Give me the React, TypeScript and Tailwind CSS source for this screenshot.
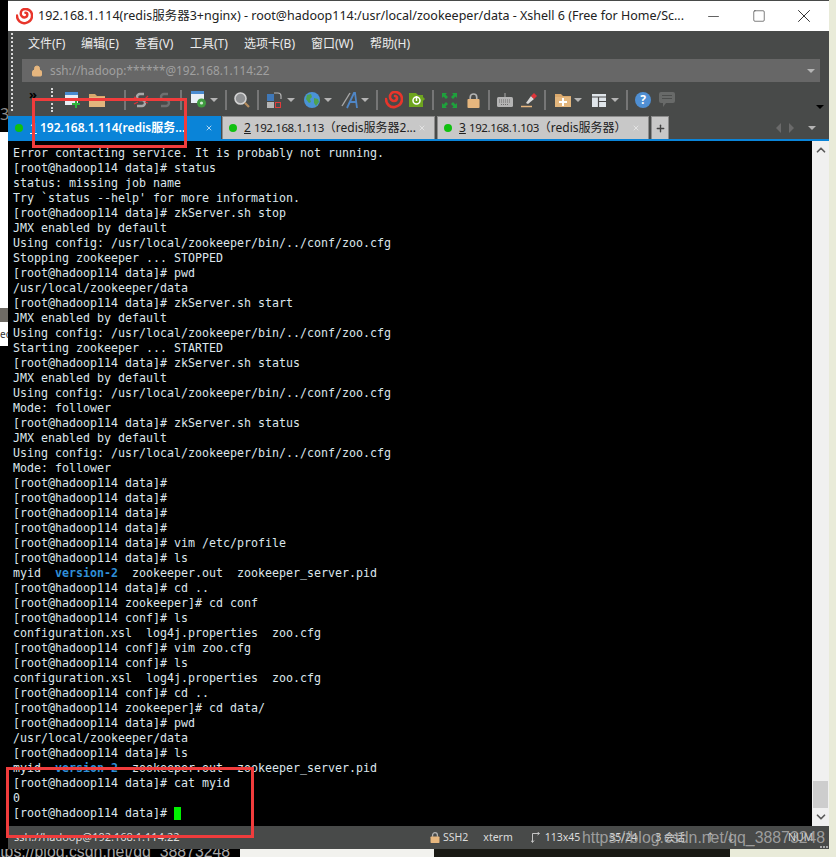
import { Minus, Square, X, Plus, ChevronUp, ChevronDown, Lock } from "lucide-react";

const UI = "font-['Noto_Sans','Noto_Sans_CJK_SC',sans-serif]";

const LINES = [
  "Error contacting service. It is probably not running.",
  "[root@hadoop114 data]# status",
  "status: missing job name",
  "Try `status --help' for more information.",
  "[root@hadoop114 data]# zkServer.sh stop",
  "JMX enabled by default",
  "Using config: /usr/local/zookeeper/bin/../conf/zoo.cfg",
  "Stopping zookeeper ... STOPPED",
  "[root@hadoop114 data]# pwd",
  "/usr/local/zookeeper/data",
  "[root@hadoop114 data]# zkServer.sh start",
  "JMX enabled by default",
  "Using config: /usr/local/zookeeper/bin/../conf/zoo.cfg",
  "Starting zookeeper ... STARTED",
  "[root@hadoop114 data]# zkServer.sh status",
  "JMX enabled by default",
  "Using config: /usr/local/zookeeper/bin/../conf/zoo.cfg",
  "Mode: follower",
  "[root@hadoop114 data]# zkServer.sh status",
  "JMX enabled by default",
  "Using config: /usr/local/zookeeper/bin/../conf/zoo.cfg",
  "Mode: follower",
  "[root@hadoop114 data]#",
  "[root@hadoop114 data]#",
  "[root@hadoop114 data]#",
  "[root@hadoop114 data]#",
  "[root@hadoop114 data]# vim /etc/profile",
  "[root@hadoop114 data]# ls",
  "LS",
  "[root@hadoop114 data]# cd ..",
  "[root@hadoop114 zookeeper]# cd conf",
  "[root@hadoop114 conf]# ls",
  "configuration.xsl  log4j.properties  zoo.cfg",
  "[root@hadoop114 conf]# vim zoo.cfg",
  "[root@hadoop114 conf]# ls",
  "configuration.xsl  log4j.properties  zoo.cfg",
  "[root@hadoop114 conf]# cd ..",
  "[root@hadoop114 zookeeper]# cd data/",
  "[root@hadoop114 data]# pwd",
  "/usr/local/zookeeper/data",
  "[root@hadoop114 data]# ls",
  "LS",
  "[root@hadoop114 data]# cat myid",
  "0",
];

const MENUS = [
  { label: "文件(F)", w: "w-[53px]" },
  { label: "编辑(E)", w: "w-[54px]" },
  { label: "查看(V)", w: "w-[55px]" },
  { label: "工具(T)", w: "w-[54px]" },
  { label: "选项卡(B)", w: "w-[67px]" },
  { label: "窗口(W)", w: "w-[59px]" },
  { label: "帮助(H)", w: "w-[50px]" },
];

function Caret({ className = "" }: { className?: string }) {
  return <span className={`h-0 w-0 shrink-0 border-x-[4px] border-t-[4px] border-x-transparent border-t-[#b4b4b4] ${className}`} />;
}

function Sep({ className = "" }: { className?: string }) {
  return <span className={`h-[20px] w-[2px] shrink-0 bg-[#767676] ${className}`} />;
}

function Shell({ size = 18 }: { size?: number }) {
  return (
    <svg width={size} height={size} viewBox="0 0 18 18" fill="none">
      <path d="M1 8c0 5 4 9 9 8 4-1 7-4 7-8 0-4-3-7-7-7-3 0-5 2-5 5 0 2 2 4 4 4 2 0 3-1 3-3 0-1-1-2-2-2" stroke="#e8352b" strokeWidth="2.6" strokeLinecap="round" />
    </svg>
  );
}

function NewSession() {
  return (
    <svg width="16" height="18" viewBox="0 0 16 18">
      <rect x="0" y="1" width="13" height="13" fill="#e8eef5" />
      <rect x="0" y="1" width="13" height="3" fill="#4a8bd0" />
      <path d="M10 9h2v3h3v2h-3v3h-2v-3H7v-2h3z" fill="#2fb53c" />
    </svg>
  );
}

function Folder({ plus = false }: { plus?: boolean }) {
  return (
    <svg width="16" height="14" viewBox="0 0 16 14">
      <path d="M0 1h6l2 2h8v11H0z" fill="#d9a86c" />
      <path d="M0 4h16v10H0z" fill="#e3b67d" />
      {plus && <path d="M7 5h2v3h3v2H9v3H7v-3H4V8h3z" fill="#fff" />}
    </svg>
  );
}

function Chain({ color, cut = false }: { color: string; cut?: boolean }) {
  return (
    <svg width="16" height="18" viewBox="0 0 16 18" fill="none">
      <path d="M11 3H7a3 3 0 0 0 0 6h2a3 3 0 0 1 0 6H4" stroke={color} strokeWidth="2.4" />
      {cut && <path d="M1 6l4 2M1 13l4-2M15 5l-3 3M15 12l-3-1" stroke="#d8343a" strokeWidth="1.3" />}
    </svg>
  );
}

function Props() {
  return (
    <svg width="16" height="18" viewBox="0 0 16 18">
      <rect x="0" y="0" width="13" height="12" fill="#e8eef5" />
      <rect x="0" y="0" width="13" height="3" fill="#4a8bd0" />
      <circle cx="10.5" cy="12" r="4.5" fill="#3f9b3f" />
      <circle cx="10.5" cy="12" r="1.6" fill="#cfe9cf" />
    </svg>
  );
}

function Magnifier() {
  return (
    <svg width="16" height="16" viewBox="0 0 16 16" fill="none">
      <circle cx="6.5" cy="6.5" r="5.5" fill="#8f9193" stroke="#d2d2d2" strokeWidth="1.6" />
      <path d="M10.800 10.800L15 15" stroke="#b58d5f" strokeWidth="2.200" />
    </svg>
  );
}

function Layout() {
  return (
    <svg width="17" height="18" viewBox="0 0 17 18" fill="none">
      <rect x="0" y="3" width="7" height="7" fill="#3f78b8" />
      <rect x="0" y="11" width="7" height="6" fill="#b5b5b5" />
      <rect x="8.5" y="11.5" width="5" height="5" stroke="#e03c3c" />
      <path d="M7 2h4a3 3 0 0 1 3 3v3" stroke="#b5b5b5" strokeWidth="1.2" />
    </svg>
  );
}

function Globe() {
  return (
    <svg width="16" height="16" viewBox="0 0 16 16">
      <circle cx="8" cy="8" r="8" fill="#4a93d6" />
      <path d="M3 3l4-1 1 3-2 2 1 3-2 1-3-4zM10 6l4 1 1 3-3 4-2-3z" fill="#4fa24f" />
    </svg>
  );
}

function FontA() {
  return (
    <svg width="20" height="18" viewBox="0 0 20 18" fill="none">
      <path d="M1 15L9 2" stroke="#a8a8a8" strokeWidth="1.4" />
      <path d="M6 17L13 2h1l2 15M9 11h7" stroke="#4f86c6" strokeWidth="1.8" />
    </svg>
  );
}

function Xftp() {
  return (
    <svg width="16" height="16" viewBox="0 0 16 16">
      <path d="M0 1h7l2 2h5v2l2 2-2 2v6H0z" fill="#6ea51f" />
      <circle cx="7.5" cy="8.5" r="3.5" fill="none" stroke="#fff" strokeWidth="1.5" />
      <path d="M7.5 4v5" stroke="#fff" strokeWidth="1.5" />
    </svg>
  );
}

function FullScreen() {
  return (
    <svg width="15" height="15" viewBox="0 0 15 15" fill="#1fa03c">
      <path d="M0 0h5L3.500 1.500 6 4 4 6 1.500 3.500 0 5zM15 0v5l-1.500-1.500L11 6 9 4l2.500-2.500L10 0zM0 15v-5l1.500 1.500L4 9l2 2-2.500 2.500L5 15zM15 15h-5l1.500-1.500L9 11l2-2 2.500 2.500L15 10z" />
    </svg>
  );
}

function Padlock({ w, h }: { w: number; h: number }) {
  return (
    <svg width={w} height={h} viewBox="0 0 14 16" fill="none">
      <path d="M3.500 7V4.500a3.500 3.500 0 0 1 7 0V7" stroke="#b3b3b3" strokeWidth="1.800" />
      <rect x="0.500" y="6.500" width="13" height="9.500" rx="1" fill="#e6b67e" />
    </svg>
  );
}

function Keyboard() {
  return (
    <svg width="16" height="14" viewBox="0 0 16 14">
      <path d="M8 0v4" stroke="#a8a8a8" />
      <rect x="0" y="4" width="16" height="10" rx="1.500" fill="#b4b4b4" />
      <path d="M2 7h12M2 9h12M4 11.500h8" stroke="#6d6d6d" strokeDasharray="1 1" />
    </svg>
  );
}

function Pen() {
  return (
    <svg width="16" height="15" viewBox="0 0 16 15">
      <path d="M5 10L10 3l3 3-6 5z" fill="#d9d9d9" />
      <path d="M10 3l3-3 3 3-3 3z" fill="#e0353b" />
      <path d="M0 13.500h11" stroke="#e6b67e" strokeWidth="1.500" />
    </svg>
  );
}

function Panes() {
  return (
    <svg width="14" height="13" viewBox="0 0 14 13">
      <rect width="14" height="13" fill="#dfe5ea" />
      <path d="M0 3h14M6.500 3v10M6.500 7.500H14" stroke="#4a4a4a" strokeWidth="1.200" />
    </svg>
  );
}

function Help() {
  return (
    <span className="flex h-4 w-4 shrink-0 items-center justify-center rounded-full bg-[#4f8fd3] text-[12px] font-bold leading-none text-white">?</span>
  );
}

function Chat() {
  return (
    <svg width="16" height="16" viewBox="0 0 16 16">
      <path d="M2 0h12a2 2 0 0 1 2 2v7a2 2 0 0 1-2 2H7l-3 4v-4H2a2 2 0 0 1-2-2V2a2 2 0 0 1 2-2z" fill="#686a69" />
      <path d="M3 3.500h10M3 6.500h10" stroke="#4c4e4d" />
    </svg>
  );
}

function Resize() {
  return (
    <svg width="9" height="11" viewBox="0 0 9 11" fill="none" stroke="#c4c4c4">
      <path d="M1.500 10V1.500H8" />
      <path d="M0 8.500l1.500 2 1.500-2M6.500 0L8.500 1.500 6.500 3" />
    </svg>
  );
}

function Toolbar() {
  return (
    <div className="relative flex h-[28px] items-center pb-[4px] pl-[21px]">
      <span className="w-[8px] shrink-0 pb-[12px] text-[13px] font-bold leading-none text-black">»</span>
      <span className="absolute left-[43px] top-0 h-[24px] border-l-2 border-dotted border-[#d8d8d8]" />
      <span className="ml-[28px] shrink-0"><NewSession /></span>
      <span className="ml-[8px] shrink-0"><Folder /></span>
      <Sep className="ml-[19px]" />
      <span className="ml-[7px] shrink-0"><Chain color="#a8a8a8" cut /></span>
      <span className="ml-[8px] shrink-0"><Chain color="#6f6f6f" /></span>
      <Sep className="ml-[7px]" />
      <span className="ml-[9px] shrink-0"><Props /></span>
      <Caret className="ml-[3px]" />
      <Sep className="ml-[7px]" />
      <span className="ml-[7px] shrink-0"><Magnifier /></span>
      <Sep className="ml-[7px]" />
      <span className="ml-[8px] shrink-0"><Layout /></span>
      <Caret className="ml-[3px]" />
      <span className="ml-[9px] shrink-0"><Globe /></span>
      <Caret className="ml-[4px]" />
      <span className="ml-[9px] shrink-0"><FontA /></span>
      <Caret />
      <Sep className="ml-[7px]" />
      <span className="ml-[7px] shrink-0"><Shell /></span>
      <span className="ml-[6px] shrink-0"><Xftp /></span>
      <Sep className="ml-[7px]" />
      <span className="ml-[8px] shrink-0"><FullScreen /></span>
      <span className="ml-[10px] shrink-0"><Padlock w={13} h={15} /></span>
      <Sep className="ml-[8px]" />
      <span className="ml-[7px] shrink-0"><Keyboard /></span>
      <span className="ml-[8px] shrink-0"><Pen /></span>
      <Sep className="ml-[7px]" />
      <span className="ml-[9px] shrink-0"><Folder plus /></span>
      <Caret className="ml-[3px]" />
      <span className="ml-[10px] shrink-0"><Panes /></span>
      <Caret className="ml-[5px]" />
      <Sep className="ml-[7px]" />
      <span className="ml-[7px] shrink-0"><Help /></span>
      <span className="ml-[8px] shrink-0"><Chat /></span>
      <span className="ml-[141px] mt-[14px] h-0 w-0 shrink-0 border-x-[4px] border-t-[4px] border-x-transparent border-t-black" />
    </div>
  );
}

function Tab({ n, ip, rest, active = false, className = "" }: { n: number; ip: string; rest: string; active?: boolean; className?: string }) {
  return (
    <div
      className={`flex h-[23px] items-center pr-[8px] text-[12px] ${
        active ? "bg-[#0a84d8] pl-[7px] font-semibold text-white" : "border-x border-t border-[#8c8c8c] bg-[#c8c8c8] pl-[6px] text-[#202020]"
      } ${className}`}
    >
      <span className="h-[8px] w-[8px] shrink-0 rounded-full bg-[#10c010]" />
      <span className="ml-[7px] min-w-0 flex-1 overflow-hidden whitespace-nowrap">
        <span className="underline">{n}</span> <span className={active ? "" : "text-[11.5px] tracking-[-0.4px]"}>{ip}</span>
        {rest}
      </span>
      <X className={`h-[8px] w-[8px] shrink-0 ${active ? "text-white" : "text-[#f0f0f0]"}`} strokeWidth={2} />
    </div>
  );
}

function TerminalLine({ text }: { text: string }) {
  if (text === "LS") {
    return (
      <div className="h-[15px] whitespace-pre">
        myid  <span className="font-bold text-[#2f8fd8]">version-2</span>  zookeeper.out  zookeeper_server.pid
      </div>
    );
  }
  return <div className="h-[15px] whitespace-pre">{text}</div>;
}

export default function App() {
  return (
    <div className={`relative flex h-[857px] w-[836px] overflow-hidden bg-black ${UI}`}>
      {/* what shows of the desktop on the left */}
      <div className="flex w-[8px] shrink-0 flex-col">
        <div className="flex h-[132px] items-end overflow-hidden bg-black pb-[10px] text-[16px] leading-none text-[#8a8a8a]">3</div>
        <div className="h-[176px] bg-white" />
        <div className="h-[14px] bg-[#6e6a64]" />
        <div className="flex h-[24px] items-center bg-white text-[10px] text-[#333]">ec</div>
        <div className="flex-1 bg-black" />
      </div>

      <div className="flex h-[849px] w-[821px] shrink-0 flex-col bg-[#484a49]">
        {/* title bar */}
        <div className="mt-px flex h-[30px] items-center bg-white pl-[8px] text-[#222]">
          <Shell size={17} />
          <span className="ml-[5px] w-[650px] whitespace-nowrap text-[12.5px]">
            192.168.1.114(redis服务器3+nginx) - root@hadoop114:/usr/local/zookeeper/data - Xshell 6 (Free for Home/Sc...
          </span>
          <Minus className="ml-[17px] h-[17px] w-[17px]" strokeWidth={1} absoluteStrokeWidth />
          <Square className="ml-[30px] h-[14px] w-[14px]" strokeWidth={1} absoluteStrokeWidth />
          <X className="ml-[27px] h-[22px] w-[22px]" strokeWidth={1} absoluteStrokeWidth />
        </div>

        <div className="relative">
          <div className="absolute left-[3px] top-[2px] h-[78px] border-l-2 border-dotted border-[#d8d8d8]" />
          {/* menu */}
          <div className="flex h-[28px] items-center pb-[3px] pl-[20px] text-[12px] text-[#ececec]">
            {MENUS.map((m) => (
              <span key={m.label} className={m.w}>
                {m.label}
              </span>
            ))}
          </div>
          {/* address bar */}
          <div className="ml-[14px] flex h-[23px] w-[798px] items-center bg-[#676767] pl-[9px] pr-[5px] text-[11.8px] text-[#a0a0a0]">
            <Lock className="h-[12px] w-[12px] text-[#e6b67e]" fill="#e6b67e" />
            <span className="ml-[7px] flex-1">ssh://hadoop:******@192.168.1.114:22</span>
            <Caret className="border-t-[#8a8a8a]" />
          </div>
          <div className="mt-[6px]">
            <Toolbar />
          </div>
        </div>

        {/* tabs */}
        <div className="flex items-center">
          <Tab n={1} ip="192.168.1.114" rest="(redis服务..." active className="w-[213px]" />
          <Tab n={2} ip="192.168.1.113" rest="（redis服务器2..." className="ml-px w-[213px]" />
          <Tab n={3} ip="192.168.1.103" rest="（redis服务器）" className="ml-[2px] w-[212px]" />
          <div className="ml-[2px] flex h-[23px] w-[18px] items-center justify-center border-x border-t border-[#8c8c8c] bg-[#c8c8c8]">
            <Plus className="h-[11px] w-[11px] text-[#444]" strokeWidth={3} />
          </div>
          <span className="ml-[107px] h-0 w-0 border-y-[5px] border-r-[5px] border-y-transparent border-r-[#6a6a6a]" />
          <span className="ml-[8px] h-0 w-0 border-y-[5px] border-l-[5px] border-y-transparent border-l-[#6a6a6a]" />
          <Caret className="ml-[14px] border-t-[#a8a8a8]" />
        </div>
        <div className="h-[2px] bg-[#0a84d8]" />

        {/* terminal */}
        <div className="flex h-[685px]">
          <div className="flex-1 overflow-hidden bg-black pl-[5px] pt-[5px] font-['DejaVu_Sans_Mono',monospace] text-[11.63px] leading-[15px] text-[#dce6ec]">
            {LINES.map((l, i) => (
              <TerminalLine key={i} text={l} />
            ))}
            <div className="flex h-[15px] items-center whitespace-pre">
              [root@hadoop114 data]# <span className="h-[13px] w-[7px] bg-[#00f000]" />
            </div>
          </div>
          <div className="flex w-[17px] flex-col items-center bg-[#f0f0f0] pb-[2px] pt-[2px]">
            <ChevronUp className="h-[14px] w-[14px] text-[#5a5a5a]" strokeWidth={3} />
            <div className="mt-auto h-[27px] w-[15px] bg-[#cdcdcd]" />
            <ChevronDown className="mt-[2px] h-[14px] w-[14px] text-[#5a5a5a]" strokeWidth={3} />
          </div>
        </div>

        {/* status bar */}
        <div className="relative flex h-[23px] items-center whitespace-nowrap pl-[6px] text-[10.5px] text-[#dcdcdc]">
          <span className="w-[416px] text-[11px]">ssh://hadoop@192.168.1.114:22</span>
          <Padlock w={10} h={11} />
          <span className="ml-[3px]">SSH2</span>
          <span className="ml-[15px]">xterm</span>
          <span className="ml-[18px]"><Resize /></span>
          <span className="ml-[5px]">113x45</span>
          <span className="ml-[29px]">35/24</span>
          <span className="ml-[18px]">3 会话</span>
          <span className="ml-[20px] text-[#c4c4c4]">↑</span>
          <span className="ml-[10px] text-[#c4c4c4]">↓</span>
          <span className="ml-[52px]">NUM</span>
          <span className="absolute bottom-[1px] right-[1px] h-[2px] w-[8px] border-t-2 border-dotted border-[#a8a8a8]" />
        </div>
      </div>

      {/* desktop on the right */}
      <div className="w-[7px] shrink-0 bg-[#e9ebd9]" />

      {/* desktop below the window */}
      <div className="absolute bottom-0 left-0 flex h-[8px] w-[836px] overflow-hidden">
        <div className="h-[8px] w-[240px] shrink-0 overflow-hidden bg-black pl-px font-['Liberation_Sans',sans-serif] text-[15.85px] leading-[5px] text-[#a8a8a8]">
          <span className="-ml-[14px] block whitespace-nowrap">https://blog.csdn.net/qq_38873248</span>
        </div>
        <div className="h-[8px] w-[194px] shrink-0 bg-[#f2f2ee]" />
        <div className="h-[8px] w-[296px] shrink-0 bg-[#1a1a14]" />
        <div className="h-[8px] flex-1 bg-[#e9ebd9]" />
      </div>

      {/* annotations on the screenshot */}
      <div className="absolute left-[32px] top-[98px] h-[50px] w-[155px] border-[3px] border-[#f03c3c]" />
      <div className="absolute left-[6px] top-[767px] h-[71px] w-[248px] border-[3px] border-[#f03c3c]" />
      <div className="absolute left-[582px] top-[826px] whitespace-nowrap font-['Liberation_Sans',sans-serif] text-[15.85px] text-[#b4b4b4]/80">
        https://blog.csdn.net/qq_38873248
      </div>
    </div>
  );
}
